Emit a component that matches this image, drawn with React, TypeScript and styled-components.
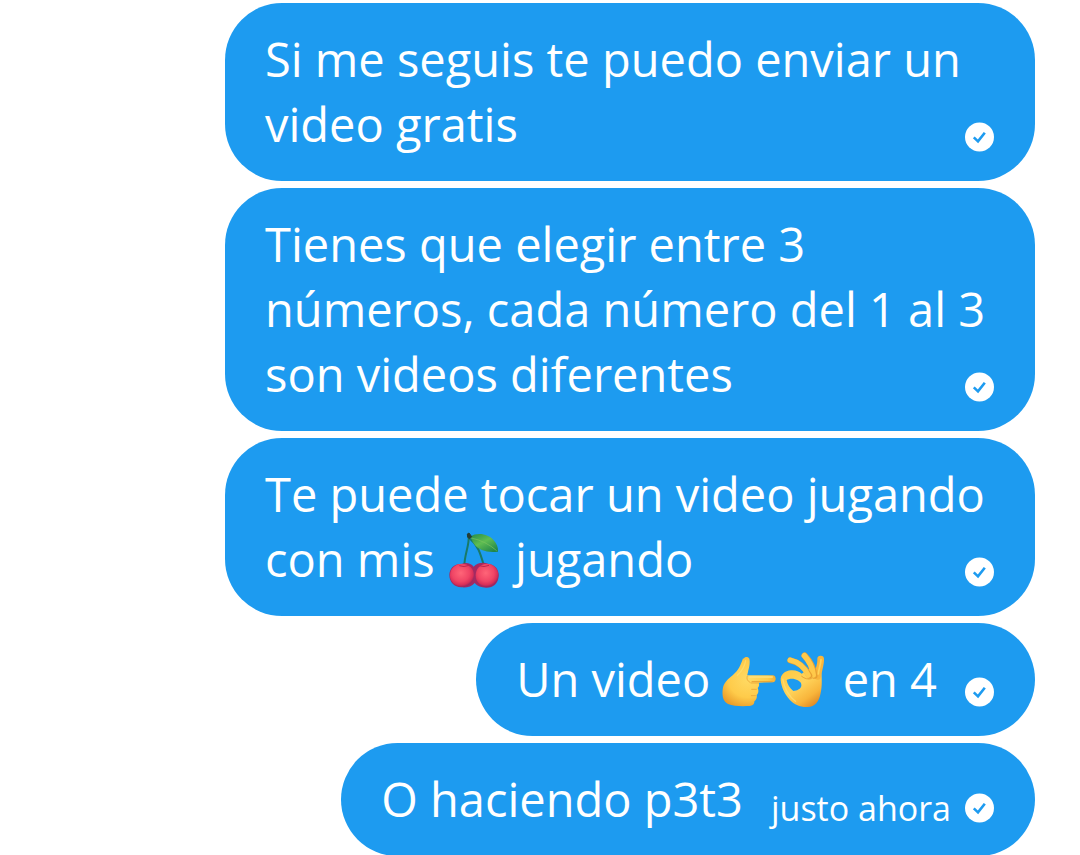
import React from "react";
import styled, { createGlobalStyle } from "styled-components";

const GlobalStyle = createGlobalStyle`
  body {
    margin: 0;
    background: #ffffff;
    font-family: "Open Sans", "Noto Sans", sans-serif;
  }
`;

const Thread = styled.ol`
  list-style: none;
  margin: 0;
  padding: 3px 45px 0 0;
  display: flex;
  flex-direction: column;
  align-items: flex-end;
  gap: 7px;
`;

const Bubble = styled.li<{ $wide?: boolean }>`
  box-sizing: border-box;
  display: ${(p) => (p.$wide ? "grid" : "flex")};
  width: ${(p) => (p.$wide ? "75vw" : "auto")};
  gap: 28px;
  padding: 24px 40px;
  border-radius: 57px;
  background: #1d9bf0;
  color: #ffffff;
`;

const Message = styled.p`
  grid-area: 1 / 1;
  margin: 0;
  font-size: 47px;
  line-height: 65px;
`;

const Meta = styled.div<{ $timed?: boolean }>`
  grid-area: 1 / 1;
  align-self: end;
  justify-self: end;
  display: flex;
  align-items: center;
  gap: 14px;
  padding-bottom: ${(p) => (p.$timed ? 9 : 5)}px;
  height: 30px;
`;

const Time = styled.span`
  font-size: 34px;
  line-height: 30px;
`;

const Emoji = styled.svg`
  display: inline-block;
  margin-right: 4px;
  vertical-align: -11px;
`;

const Check = () => (
  <svg width="30" height="30" viewBox="0 0 30 30" role="img" aria-label="Enviado">
    <circle cx="14.5" cy="15" r="14.5" fill="#fff" />
    <path d="M8.8 15.4l4.2 4 6.8-8.6" fill="none" stroke="#1d9bf0" strokeWidth="2.6" />
  </svg>
);

const Cherries = () => (
  <Emoji width="52" height="56" viewBox="57 36 156 168" role="img" aria-label="cerezas">
    <defs>
      <radialGradient id="cherry" cx="0.45" cy="0.4" r="0.6">
        <stop offset="0" stopColor="#ff6578" />
        <stop offset="0.6" stopColor="#f04565" />
        <stop offset="0.85" stopColor="#d92f58" />
        <stop offset="1" stopColor="#96265f" />
      </radialGradient>
      <linearGradient id="leaf" x1="0" y1="0" x2="0.8" y2="1">
        <stop offset="0" stopColor="#238a4a" />
        <stop offset="0.5" stopColor="#5fbd52" />
        <stop offset="1" stopColor="#218649" />
      </linearGradient>
    </defs>
    <path d="M122 46C125 75 109 104 109 138M126 56C151 76 158 104 168 138" fill="none" stroke="#197a67" strokeWidth="6" />
    <path d="M101 132c12-6 28-2 36 8 10-12 29-15 45-8 19 2 31 17 30 35-1 24-18 37-38 36-14 0-27-5-34-14-9 11-25 15-40 13-21-1-36-16-36-37 0-19 15-36 37-33z" fill="#a22a62" />
    <ellipse cx="177" cy="166" rx="34" ry="35" fill="url(#cherry)" />
    <ellipse cx="102" cy="166" rx="36" ry="35" fill="url(#cherry)" />
    <path d="M94 137q14 6 29-1M153 137q15 6 30-1" fill="none" stroke="#bd2850" strokeWidth="3" />
    <path d="M126 50c24-14 55-8 71 11 9 10 14 21 13 34-31 4-59-4-71-22-7-9-8-18-13-23z" fill="url(#leaf)" />
    <path d="M130 54q43 9 76 38" fill="none" stroke="#7cc35e" strokeWidth="2" />
    <path d="M118 42l5-3 8 11-6 6-6-4z" fill="#253e34" stroke="#253e34" strokeWidth="3" strokeLinejoin="round" />
  </Emoji>
);

const Pointing = () => (
  <Emoji width="54" height="52" viewBox="27 45 162 156" role="img" aria-label="dedo señalando">
    <defs>
      <radialGradient id="palm" cx="0.48" cy="0.45" r="0.62">
        <stop offset="0" stopColor="#ffda64" />
        <stop offset="0.6" stopColor="#fecb4a" />
        <stop offset="1" stopColor="#e99a28" />
      </radialGradient>
    </defs>
    <path d="M92 53c3-7 14-7 17 0 3 12-1 27-3 35-1 7-3 11-3 15h76c12 0 12 21 0 21l-42 1c3 7 1 12-3 16 4 9 2 16-3 21 2 9-2 15-7 19 1 8-6 14-14 14-24 1-49 1-65-6-15-7-18-25-16-43 2-20 15-31 30-43 18-15 24-31 31-51z" fill="url(#palm)" />
    <path d="M103 105c-3 8 0 15 8 19M136 126h-22M130 145h-14M127 164h-12" fill="none" stroke="#e9a537" strokeWidth="2.5" strokeLinecap="round" />
    <path d="M109 108h69" fill="none" stroke="#ffe079" strokeWidth="4" strokeLinecap="round" />
    <path d="M117 122h61" fill="none" stroke="#e8a035" strokeWidth="3" strokeLinecap="round" />
    <path d="M98 58c-3 19-12 33-25 45" fill="none" stroke="#ffe277" strokeWidth="4" strokeLinecap="round" opacity="0.6" />
  </Emoji>
);

const OkHand = () => (
  <Emoji width="46" height="56" viewBox="210 39 138 168" role="img" aria-label="mano OK">
    <defs>
      <linearGradient id="ok" x1="0" y1="0" x2="0.75" y2="1">
        <stop offset="0" stopColor="#ffc840" />
        <stop offset="0.5" stopColor="#ffd35a" />
        <stop offset="0.8" stopColor="#f8b53b" />
        <stop offset="1" stopColor="#e18b25" />
      </linearGradient>
    </defs>
    {/* palm joined to the ring made by thumb and index finger */}
    <path d="M333 92c3 20 4 51-1 70-5 27-17 41-39 42-22 1-42-8-54-22-15-16-25-38-27-58-1-17 13-29 31-30 15-1 24 4 32 10l24-16z M230 124c2 13 10 24 20 32 11-1 21-5 24-15 2-10-7-17-19-20-9-3-21-1-25 3z" fill="url(#ok)" fillRule="evenodd" />
    {/* raised fingers, back to front */}
    <path d="M332 60c1 16-6 30-9 52" fill="none" stroke="#f9b53c" strokeWidth="20" strokeLinecap="round" />
    <path d="M284 50c14 15 26 34 29 60" fill="none" stroke="#e8a032" strokeWidth="19" strokeLinecap="round" />
    <path d="M283 50c14 15 24 33 27 58" fill="none" stroke="#ffc94a" strokeWidth="16" strokeLinecap="round" />
    <path d="M241 64c22 5 44 20 57 46" fill="none" stroke="#e8a032" strokeWidth="18" strokeLinecap="round" />
    <path d="M240 63c22 5 43 20 55 46" fill="none" stroke="#ffcb4c" strokeWidth="15" strokeLinecap="round" />
    <path d="M275 112c9 7 19 10 29 7" fill="none" stroke="#e9a236" strokeWidth="3" strokeLinecap="round" />
    <path d="M218 119c4 26 17 52 40 69" fill="none" stroke="#ffe078" strokeWidth="4" opacity="0.7" />
    <path d="M333 62c-1 16-7 28-8 43" fill="none" stroke="#ffd45c" strokeWidth="5" strokeLinecap="round" />
  </Emoji>
);

const Status = ({ time }: { time?: string }) => (
  <Meta $timed={Boolean(time)}>
    {time && <Time>{time}</Time>}
    <Check />
  </Meta>
);

export default function App() {
  return (
    <main>
      <GlobalStyle />
      <Thread>
        <Bubble $wide>
          <Message>Si me seguis te puedo enviar un video gratis</Message>
          <Status />
        </Bubble>
        <Bubble $wide>
          <Message>
            Tienes que elegir entre 3 números, cada número del 1 al 3 son videos diferentes
          </Message>
          <Status />
        </Bubble>
        <Bubble $wide>
          <Message>
            Te puede tocar un video jugando
            <br />
            con mis <Cherries /> jugando
          </Message>
          <Status />
        </Bubble>
        <Bubble>
          <Message>
            Un video <Pointing />
            <OkHand /> en 4
          </Message>
          <Status />
        </Bubble>
        <Bubble>
          <Message>O haciendo p3t3</Message>
          <Status time="justo ahora" />
        </Bubble>
      </Thread>
    </main>
  );
}
